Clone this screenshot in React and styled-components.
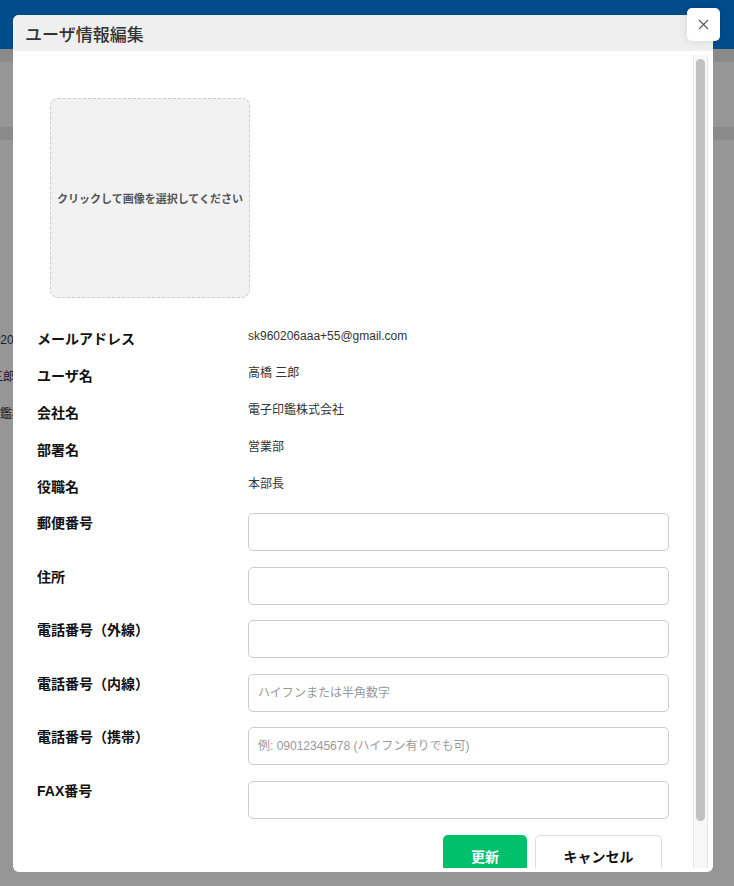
import styled, { createGlobalStyle } from "styled-components";
import { X } from "lucide-react";

const GlobalStyle = createGlobalStyle`
  html, body {
    margin: 0;
    padding: 0;
    height: 100%;
    overflow: hidden;
  }
  body {
    font-family: "Liberation Sans", "Noto Sans CJK JP", sans-serif;
    color: #222;
  }
`;

const infoRows = [
  { label: "メールアドレス", value: "sk960206aaa+55@gmail.com" },
  { label: "ユーザ名", value: "高橋 三郎" },
  { label: "会社名", value: "電子印鑑株式会社" },
  { label: "部署名", value: "営業部" },
  { label: "役職名", value: "本部長" },
];

const fieldRows = [
  { label: "郵便番号", placeholder: "" },
  { label: "住所", placeholder: "" },
  { label: "電話番号（外線）", placeholder: "" },
  { label: "電話番号（内線）", placeholder: "ハイフンまたは半角数字" },
  { label: "電話番号（携帯）", placeholder: "例: 09012345678 (ハイフン有りでも可)" },
  { label: "FAX番号", placeholder: "" },
];

const bgRows = [
  { text: "2020/02/06", shift: -13 },
  { text: "三郎", shift: -9 },
  { text: "印鑑株式会社", shift: -12 },
];

const App = () => {
  return (
    <>
      <GlobalStyle />
      <Page>
        <TopBar />
        <SubBar />
        <Panel />
        <SubBar />
        <BgList>
          {bgRows.map((r) => (
            <BgRow key={r.text} $shift={r.shift}>
              {r.text}
            </BgRow>
          ))}
        </BgList>
      </Page>

      <Overlay>
        <Dialog>
          <DialogHeader>ユーザ情報編集</DialogHeader>
          <CloseButton aria-label="閉じる">
            <X size={17} strokeWidth={1.5} />
          </CloseButton>

          <Body>
            <Content>
              <ImagePicker>クリックして画像を選択してください</ImagePicker>

              <InfoList>
                {infoRows.map((r) => (
                  <InfoRow key={r.label}>
                    <Label>{r.label}</Label>
                    <Value>{r.value}</Value>
                  </InfoRow>
                ))}
              </InfoList>

              {fieldRows.map((r) => (
                <FieldRow key={r.label}>
                  <Label>{r.label}</Label>
                  <Input placeholder={r.placeholder} />
                </FieldRow>
              ))}

              <Actions>
                <Button $primary>更新</Button>
                <Button>キャンセル</Button>
              </Actions>
            </Content>

            <ScrollTrack>
              <ScrollThumb />
            </ScrollTrack>
          </Body>
        </Dialog>
      </Overlay>
    </>
  );
};

export default App;

/* page behind the dialog */

const Page = styled.div`
  width: 100%;
  height: 886px;
  background: #fff;
  overflow: hidden;
`;

const TopBar = styled.header`
  height: 49px;
  background: #0080ea;
`;

const SubBar = styled.div`
  height: 13px;
  background: #ebebeb;
`;

const Panel = styled.div`
  height: 65px;
  background: #fff;
`;

// only the sliver left of the dialog is ever visible
const BgList = styled.div`
  width: 13px;
  overflow: hidden;
  padding-top: 193px;
`;

const BgRow = styled.div`
  height: 37px;
  margin-left: ${(p) => p.$shift}px;
  font-size: 12px;
  line-height: 14px;
  color: #333;
  white-space: nowrap;
`;

/* dialog */

const Overlay = styled.div`
  position: fixed;
  inset: 0;
  background: rgba(0, 0, 0, 0.41);
  padding: 15px 0 14px 13px;
  box-sizing: border-box;
`;

const Dialog = styled.div`
  position: relative;
  width: 700px;
  height: 100%;
  background: #fff;
  border-radius: 6px;
  display: flex;
  flex-direction: column;
`;

const DialogHeader = styled.div`
  flex: 0 0 36px;
  display: flex;
  align-items: center;
  padding: 0 12px;
  background: #efefef;
  border-radius: 6px 6px 0 0;
  font-size: 17px;
  font-weight: 500;
  color: #333;
`;

const CloseButton = styled.button`
  position: absolute;
  top: -7px;
  right: -7px;
  width: 33px;
  height: 33px;
  padding: 0;
  border: none;
  border-radius: 5px;
  background: #fff;
  color: #555;
  display: flex;
  align-items: center;
  justify-content: center;
  box-shadow: 0 0 8px rgba(0, 0, 0, 0.12);
  cursor: pointer;
`;

const Body = styled.div`
  flex: 1;
  min-height: 0;
  display: flex;
  margin: 4px 5px 4px 0;
`;

const Content = styled.div`
  flex: 1;
  min-width: 0;
  overflow: hidden;
  padding: 43px 24px 0 24px;
`;

const ScrollTrack = styled.div`
  flex: 0 0 15px;
  box-sizing: border-box;
  padding: 4px 2px 0;
  background: #f8f8f8;
  border-left: 1px solid #e6e6e6;
  border-right: 1px solid #e6e6e6;
`;

const ScrollThumb = styled.div`
  height: 762px;
  border-radius: 5px;
  background: #c1c1c1;
`;

const ImagePicker = styled.div`
  width: 200px;
  height: 200px;
  margin-left: 13px;
  box-sizing: border-box;
  display: flex;
  align-items: center;
  justify-content: center;
  background: #f2f2f2;
  border: 1px dashed #ccc;
  border-radius: 8px;
  font-size: 11px;
  font-weight: 700;
  color: #555;
  white-space: nowrap;
  cursor: pointer;
`;

const InfoList = styled.div`
  margin-top: 31px;
  margin-bottom: -1px;
`;

const InfoRow = styled.div`
  display: grid;
  grid-template-columns: 211px 1fr;
  align-items: start;
  height: 37px;
`;

const Label = styled.div`
  font-size: 14px;
  line-height: 20px;
  font-weight: 700;
  color: #111;
  white-space: nowrap;
`;

const Value = styled.div`
  font-size: 12px;
  line-height: 14px;
  color: #333;
`;

const FieldRow = styled.div`
  display: grid;
  grid-template-columns: 211px 1fr;
  align-items: start;
  margin-bottom: 15.6px;
`;

const Input = styled.input`
  height: 38px;
  box-sizing: border-box;
  width: 100%;
  padding: 0 9px;
  border: 1px solid #ccc;
  border-radius: 5px;
  font-family: inherit;
  font-size: 12px;
  color: #333;
  outline: none;

  &::placeholder {
    color: #999;
  }
`;

const Actions = styled.div`
  display: flex;
  justify-content: flex-end;
  gap: 8px;
  padding-right: 7px;
`;

const Button = styled.button`
  height: 42px;
  width: ${(p) => (p.$primary ? "84px" : "127px")};
  flex: none;
  border-radius: 5px;
  border: ${(p) => (p.$primary ? "none" : "1px solid #ddd")};
  background: ${(p) => (p.$primary ? "#00c06b" : "#fff")};
  color: ${(p) => (p.$primary ? "#fff" : "#111")};
  font-family: inherit;
  font-size: 14px;
  font-weight: 700;
  cursor: pointer;
`;
